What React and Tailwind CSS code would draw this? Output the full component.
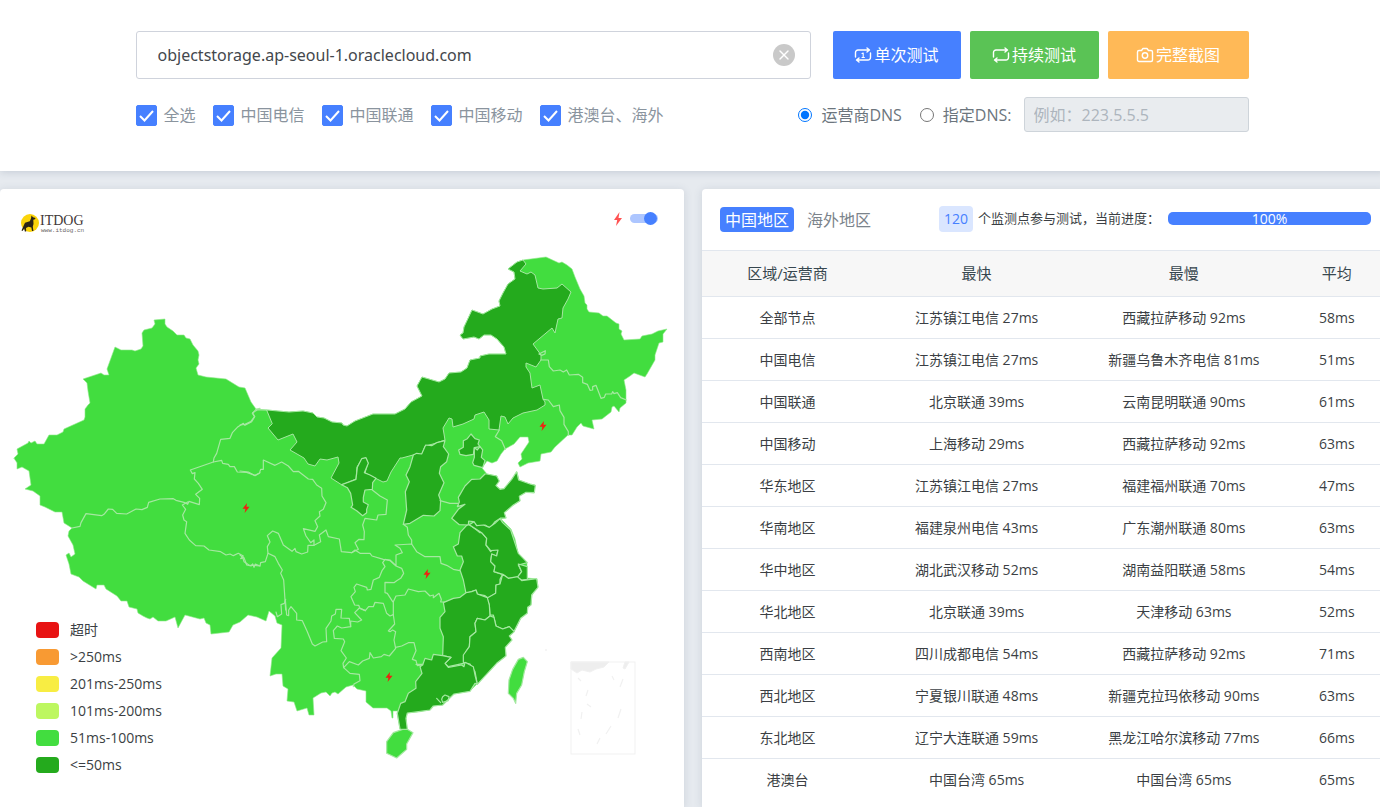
import React, { useState } from 'react';
import { X } from 'lucide-react';

const carriers = ['全选', '中国电信', '中国联通', '中国移动', '港澳台、海外'];

const legend = [
  { label: '超时', color: 'bg-[#e81313]' },
  { label: '>250ms', color: 'bg-[#f89a33]' },
  { label: '201ms-250ms', color: 'bg-[#f8ed43]' },
  { label: '101ms-200ms', color: 'bg-[#bdf760]' },
  { label: '51ms-100ms', color: 'bg-[#42dd3f]' },
  { label: '<=50ms', color: 'bg-[#24aa1d]' },
];

const rows = [
  ['全部节点', '江苏镇江电信 27ms', '西藏拉萨移动 92ms', '58ms'],
  ['中国电信', '江苏镇江电信 27ms', '新疆乌鲁木齐电信 81ms', '51ms'],
  ['中国联通', '北京联通 39ms', '云南昆明联通 90ms', '61ms'],
  ['中国移动', '上海移动 29ms', '西藏拉萨移动 92ms', '63ms'],
  ['华东地区', '江苏镇江电信 27ms', '福建福州联通 70ms', '47ms'],
  ['华南地区', '福建泉州电信 43ms', '广东潮州联通 80ms', '63ms'],
  ['华中地区', '湖北武汉移动 52ms', '湖南益阳联通 58ms', '54ms'],
  ['华北地区', '北京联通 39ms', '天津移动 63ms', '52ms'],
  ['西南地区', '四川成都电信 54ms', '西藏拉萨移动 92ms', '71ms'],
  ['西北地区', '宁夏银川联通 48ms', '新疆克拉玛依移动 90ms', '63ms'],
  ['东北地区', '辽宁大连联通 59ms', '黑龙江哈尔滨移动 77ms', '66ms'],
  ['港澳台', '中国台湾 65ms', '中国台湾 65ms', '65ms'],
];

// Map outline, in map units
const MAINLAND =
  '14,458 18,454 17,449 28,443 29,441 31,443 35,441 37,444 44,444 49,435 57,435 63,432 64,429 84,420 85,417 85,409 88,405 90,403 88,391 87,383 83,379 101,373 104,375 109,375 107,369 115,347 121,350 132,350 135,351 141,349 143,346 142,333 144,330 152,328 155,324 154,320 165,319 165,324 167,327 173,331 177,335 184,335 186,338 190,339 193,345 198,351 199,355 198,360 199,364 196,368 198,375 206,377 226,379 239,387 245,388 251,402 256,409 267,410 289,412 303,411 313,413 317,417 324,418 332,422 342,423 343,425 347,426 355,421 373,414 395,414 405,409 411,402 422,396 417,386 422,377 439,382 445,379 449,373 461,372 467,368 470,360 480,358 480,356 489,354 506,354 504,347 497,339 491,335 484,335 479,339 474,337 463,339 460,335 463,333 464,327 472,310 483,314 492,309 500,306 499,301 503,293 508,284 515,279 514,272 508,269 517,262 523,260 546,257 559,263 562,262 567,265 572,269 575,277 580,289 584,296 585,303 587,305 587,309 589,312 599,313 603,316 607,316 616,323 619,324 619,329 622,331 621,334 624,340 640,339 642,336 652,334 658,331 667,329 663,334 663,342 659,343 655,355 655,360 647,374 645,377 634,373 630,376 624,380 626,390 626,403 620,408 619,412 614,406 612,407 611,412 602,419 592,420 594,429 583,426 581,423 577,427 572,435 568,435 555,447 551,452 541,454 540,461 528,463 520,467 518,463 522,459 521,454 529,442 528,437 520,437 514,444 505,449 501,454 497,461 492,463 487,461 482,468 487,474 497,476 498,481 496,486 500,489 504,489 512,479 517,472 519,480 530,484 535,485 534,493 526,492 519,496 520,501 513,505 504,513 506,518 501,519 511,529 515,539 518,553 527,563 527,578 537,579 538,587 533,591 532,595 531,605 528,607 527,613 521,618 514,632 509,636 512,640 505,647 506,656 497,663 477,684 470,691 454,694 448,699 443,705 433,706 430,710 418,712 407,713 406,718 407,729 400,729 397,713 398,711 393,711 393,718 392,718 391,711 387,708 373,708 366,702 366,691 357,689 353,685 346,687 338,694 335,692 332,693 330,696 326,692 321,693 313,698 314,715 309,715 307,708 297,711 294,702 287,701 288,689 283,686 282,674 276,674 270,676 272,658 281,648 282,625 277,623 275,616 269,611 266,621 257,617 248,615 240,622 233,625 229,632 211,634 210,625 206,623 204,618 200,619 185,615 178,628 175,617 166,621 158,621 153,617 150,619 147,618 143,616 138,613 137,609 129,607 127,601 121,601 117,596 106,589 104,585 97,585 96,589 83,581 79,577 71,574 69,564 66,555 69,553 71,557 75,554 73,545 68,536 69,531 72,528 64,523 62,512 55,512 45,507 40,505 40,496 33,491 25,489 31,485 29,471 22,467 17,469 17,463';

const INNER_MONGOLIA =
  '267,410 289,412 303,411 313,413 317,417 324,418 332,422 342,423 343,425 347,426 355,421 373,414 395,414 405,409 411,402 422,396 417,386 422,377 439,382 445,379 449,373 461,372 467,368 470,360 480,358 480,356 489,354 506,354 504,347 497,339 491,335 484,335 479,339 474,337 463,339 460,335 463,333 464,327 472,310 483,314 492,309 500,306 499,301 503,293 508,284 515,279 514,272 508,269 517,262 523,260 526,264 520,271 527,274 531,272 535,275 538,288 543,289 557,288 562,284 571,292 568,299 563,308 562,318 558,319 555,333 552,328 533,344 541,355 541,360 536,367 526,363 526,367 530,373 532,388 540,385 543,399 545,402 545,405 537,410 523,413 513,418 508,424 505,417 501,416 499,430 489,429 489,420 484,412 475,415 474,419 463,424 453,427 452,419 449,418 443,428 445,440 433,444 425,446 422,454 413,455 402,458 400,458 391,472 387,481 383,482 375,478 365,473 368,463 366,458 362,459 357,467 356,479 342,485 331,478 339,463 338,457 327,460 320,459 315,466 308,464 304,458 290,450 297,442 293,434 278,440 268,428 272,424';

// Provinces and borders are drawn at three units per map unit, sheet by sheet
const sheets = [
  {
    id: 'west',
    transform: 'translate(0 300) scale(0.33333)',
    dark: [],
    light: [],
    borders: [
      '216,684 240,679 243,668 258,641 305,647 312,643 325,627 338,628 350,640 380,642 408,627 426,629 442,622 446,607 480,597 520,596 528,601 552,607 563,613 567,604 598,614 599,595 587,583 607,568 595,550 583,537 585,518 577,521 571,510 640,486 665,481 668,490 685,493 690,500 703,500 712,516 740,517 765,526 780,518',
      '640,486 642,474 650,460 662,418 690,415 697,398 712,382 730,370 735,376 755,365 764,350 757,340 768,328 780,325',
      '563,606 547,615 557,628 548,645 552,660 560,665 555,700 568,720 587,737 612,738 627,750 662,755 678,765 690,762 700,767 715,760 730,768 722,776 732,773 740,795 753,798 758,792 762,802 766,792 780,798',
    ],
  },
  {
    id: 'north',
    transform: 'translate(240 380) scale(0.33333)',
    dark: [
      '305,314 348,298 352,262 365,236 378,233 385,250 373,278 390,285 408,295 398,308 397,328 375,330 370,352 370,366 385,374 380,388 380,398 368,407 350,392 333,382 338,375 332,340 322,323',
      '520,225 530,220 545,222 557,195 575,197 590,188 615,182 610,200 626,222 620,245 602,260 598,280 612,308 596,345 602,362 600,392 582,408 550,406 510,430 490,433 500,390 496,335 508,305 498,285 510,260',
    ],
    light: [],
    borders: [
      '0,135 15,133 32,125 44,110 38,98 52,90 80,90',
      '0,273 25,276 45,287 58,280 62,268 70,268 70,240 105,256 125,246 145,258 160,275 175,274 205,297 218,298 230,315 245,325 246,348 258,368 250,388 238,395 240,408 225,422 233,440 225,454 190,446 198,468 212,488 222,480 222,496 204,496 203,516 185,522 168,515 165,505 156,514 130,495 115,460 98,453 82,467 90,486 82,500 84,520 76,545 62,548 60,558 40,556 28,556 12,545 8,532 0,525',
      '222,496 242,485 238,465 258,450 265,470 298,477 304,515 335,518 355,508 345,488 357,478 372,479 373,455 368,435 375,415 410,420 414,405 438,403 442,360 420,348 397,330',
      '335,518 345,510 360,520 390,520 396,528 430,538 450,540 468,557 468,525 487,518 480,505 465,495 515,492 530,515 555,530 600,530 603,550 620,556 640,568 660,572',
      '490,433 502,442 505,465 515,480 515,492',
      '600,362 630,370 660,370',
      '84,520 105,530 115,550 127,570 122,580 131,600 137,690',
    ],
  },
  {
    id: 'northeast',
    transform: 'translate(400 240) scale(0.33333)',
    dark: [],
    light: [],
    borders: [
      '417,342 436,332 435,342 425,346 417,342',
      '422,360 445,360 448,380 460,393 480,390 490,396 500,390 508,405 535,403 548,412 548,428 562,433 570,451 578,450 578,440 588,436 603,475 613,472 617,462 635,462 638,455 642,461 652,458 662,473 679,480',
      '430,478 445,480 460,500 478,495 480,512 492,532 492,553 505,575 505,586',
      '298,570 286,590 305,602 316,628',
    ],
  },
  {
    id: 'bohai',
    transform: 'translate(420 400) scale(0.33333)',
    dark: [
      '153,102 165,116 178,120 174,132 180,140 163,143 160,163 138,167 120,163 116,150 130,142 130,122 142,116',
      '163,152 163,143 172,150 180,140 188,150 184,172 195,182 188,203 162,196 158,188 163,172',
      '200,222 230,228 238,243 228,257 240,268 252,266 275,238 290,215 296,240 330,252 346,256 343,278 318,277 298,289 300,302 280,315 253,338 258,354 242,354 225,365 210,384 195,375 172,381 160,365 146,363 145,375 118,374 95,355 115,328 135,313 112,320 118,306 115,292 135,258 155,238 180,237 195,222',
    ],
    light: [],
    borders: [],
  },
  {
    id: 'southwest',
    transform: 'translate(250 540) scale(0.33333)',
    dark: [],
    light: ['430,578 458,568 472,568 489,578 470,612 470,628 440,654 410,640 410,605'],
    borders: [
      '107,178 103,190 93,194 95,222 82,230 78,216',
      '106,180 110,225 116,227 116,210 123,200 140,220 140,240 157,242 172,275 187,312 195,318 218,306 230,305 228,265 243,243 245,228 256,222 258,208 275,208 273,234 298,235 302,260 275,264 262,258 250,272 253,295 280,297 284,305 273,332 289,354 279,370 281,383 298,365 325,375 338,363 358,355 360,338 370,354 394,350 402,343 418,348 437,325 432,300 437,275 428,270 420,275 415,273 434,252 430,225',
      '302,260 302,243 323,246 335,240 314,218 328,204 346,212 356,200 370,200 375,187 400,190 410,220 420,228 430,224',
      '346,212 330,205 326,196 314,195 303,170 316,155 312,142 320,132 350,142 352,150 363,148 370,120 388,112 396,92 405,80 398,68 405,58 420,62 438,78 455,85 461,100 452,115 440,122 432,128 405,127 405,158 412,160 428,185',
      '430,225 430,185 438,168 465,165 475,147 505,155 525,153 540,168 550,165 550,173 567,160 574,178 572,186 585,186',
      '437,322 455,318 475,308 492,308 498,332 487,358 498,362 502,377 515,375',
      '281,383 300,400 328,403 330,422 312,432 310,440',
    ],
  },
  {
    id: 'southeast',
    transform: 'translate(380 530) scale(0.33333)',
    dark: [
      '240,8 260,-14 268,-16 290,0 300,8 305,8 320,25 318,45 332,65 340,57 354,60 350,78 335,72 332,95 345,108 342,125 368,133 360,148 360,162 348,165 347,190 325,205 315,197 292,192 288,180 275,185 258,190 250,150 240,120 250,95 245,78 232,78 220,50 235,42',
      '268,-16 282,-25 290,-13 310,-15 328,-8 345,-20 360,-34 368,-22 392,0 415,70 442,98 415,105 425,125 412,142 385,145 368,133 342,125 345,108 332,95 335,72 350,78 354,60 332,62 318,45 320,25 305,8',
      '415,102 442,110 442,148 425,150 412,142 425,125',
      '368,133 385,145 412,140 425,152 470,146 474,172 455,195 453,225 443,232 442,250 422,265 403,302 395,303 388,290 368,297 348,288 340,255 330,255 328,225 320,205 347,190 348,165 360,162',
      '190,218 220,205 240,202 258,188 275,185 288,180 292,192 322,203 328,225 330,258 315,270 292,265 285,280 288,305 270,320 268,350 258,365 250,400 205,410 195,400 213,382 188,377 190,320 180,295 180,262 195,245',
      '330,258 342,262 348,288 368,297 388,290 403,305 388,318 396,330 376,352 378,378 350,400 292,463 285,425 270,402 250,397 250,375 268,350 270,320 288,305 285,280 292,265 315,270',
      '128,405 135,385 155,390 160,373 188,377 213,382 195,400 205,412 245,405 252,410 255,397 280,410 285,435 292,463 285,460 270,484 222,492 188,525 160,528 150,540 82,549 78,565 82,598 60,597 52,550 62,520 75,515 85,490 108,475 107,455 126,430 120,410',
    ],
    light: ['430,382 442,395 433,425 425,465 410,490 407,520 400,505 385,490 387,450 398,418 415,388'],
    borders: [
      '188,500 195,495 207,500 205,512 188,517 185,508 188,500',
      '170,505 182,518',
      '108,403 128,403',
    ],
  },
];

const lossMarks = [
  [246, 508],
  [543, 426],
  [427, 574],
  [389, 677],
];

const ChinaMap = () => (
  <svg viewBox="0 189 684 618" className="block w-full" role="img" aria-label="中国地区">
    <g strokeLinejoin="round" strokeLinecap="round">
      <polygon points={MAINLAND} fill="#42dd3f" stroke="#8ee98a" strokeWidth="0.6" />
      <polygon points={INNER_MONGOLIA} fill="#24aa1d" stroke="#a5e8a1" strokeWidth="1" />
      {sheets.map((sheet) => (
        <g key={sheet.id} transform={sheet.transform} stroke="#a5e8a1" strokeWidth="3.6">
          {sheet.light.map((points) => (
            <polygon key={points} points={points} fill="#42dd3f" />
          ))}
          {sheet.dark.map((points) => (
            <polygon key={points} points={points} fill="#24aa1d" />
          ))}
          {sheet.borders.map((points) => (
            <polyline key={points} points={points} fill="none" />
          ))}
        </g>
      ))}
    </g>

    {lossMarks.map(([x, y]) => (
      <path
        key={x}
        transform={`translate(${x} ${y})`}
        d="M1 -5 L-3.5 0.8 L-0.6 0.8 L-1.4 5 L3.5 -1.2 L0.5 -1.2 Z"
        fill="#ee2211"
      />
    ))}

    {/* South China Sea inset */}
    <g fill="none" stroke="#f1f1f1">
      <rect x="571" y="662" width="64" height="92" strokeWidth="1" />
      <path d="M571 662h38l-5 5-8 2-6 3-8-2-5 3-6-4z" fill="#eeeeee" />
      <path d="M629 662l-4 7-2-1 2-6z" fill="#eeeeee" />
      <path
        d="M623 679l-3 8M621 709l-3 9M611 726l-5 8M600 738l-3 6M578 729l2 6M582 712l-1 7M587 704l4 3M588 690l-2 6M578 678l3 3M612 676l2 4"
        strokeWidth="1.2"
      />
    </g>
    <circle cx="546" cy="650" r="0.7" fill="#e3e3e3" />
  </svg>
);

const Logo = () => (
  <svg viewBox="0 0 66 20" width="66" height="20" role="img" aria-label="ITDOG">
    <circle cx="9" cy="10" r="9" fill="#fbd40a" />
    <path
      d="M10.500 2.500L12 4.200 14.500 5 14 6.300 12.300 6.800 12.500 11 11.800 13.500 12.400 18 11 18 10.400 14.600 7.500 13.800 5 15 5.200 18.600 3.800 18.600 3.300 15.500 1.500 18 .5 17.500 2.500 13 4 9.800 8.800 8.200 10 5.500Z"
      fill="#2b2416"
    />
    <text x="19" y="12" fontSize="14" fill="#3f3838" className="font-['Liberation_Serif',serif]">
      ITDOG
    </text>
    <text x="20" y="19" fontSize="6" fill="#6b6666" className="font-['Liberation_Mono',monospace]">
      www.itdog.cn
    </text>
  </svg>
);

const LoopIcon = ({ once }) => (
  <svg
    viewBox="0 0 18 16"
    width="18"
    height="16"
    fill="none"
    stroke="currentColor"
    strokeWidth="1.4"
    strokeLinecap="round"
    strokeLinejoin="round"
  >
    <path d="M1.500 10V5.500a2.500 2.500 0 0 1 2.500-2.500h11M13 1l2.500 2L13 5" />
    <path d="M16.500 6v4.500a2.500 2.500 0 0 1-2.500 2.500H3M5 11l-2.500 2L5 15" />
    {once && <path d="M8 6.500l1.200-.5v4.500M8 10.500h2.400" strokeWidth="1.1" />}
  </svg>
);

const CameraIcon = () => (
  <svg viewBox="0 0 18 16" width="18" height="16" fill="none" stroke="currentColor" strokeWidth="1.4" strokeLinejoin="round">
    <path d="M3 3.500h2.500L7 1.500h4l1.500 2H15a1.500 1.500 0 0 1 1.500 1.500v8a1.500 1.500 0 0 1-1.500 1.500H3A1.500 1.500 0 0 1 1.500 13V5A1.500 1.500 0 0 1 3 3.500Z" />
    <circle cx="9" cy="8.500" r="2.700" />
  </svg>
);

const CarrierCheckbox = ({ label }) => (
  <label className="flex items-center gap-[7px] text-[#8a949e]">
    <span className="relative size-[21px]">
      <input
        type="checkbox"
        defaultChecked
        className="peer block size-[21px] appearance-none rounded-[2px] border border-gray-300 checked:border-[#4680ff] checked:bg-[#4680ff]"
      />
      <svg
        viewBox="0 0 21 21"
        className="pointer-events-none absolute inset-0 hidden peer-checked:block"
        fill="none"
        stroke="white"
        strokeWidth="2"
      >
        <path d="M4 11l4.500 4.500L17 6" />
      </svg>
    </span>
    {label}
  </label>
);

const App = () => {
  const [host, setHost] = useState('objectstorage.ap-seoul-1.oraclecloud.com');
  const [dns, setDns] = useState('carrier');
  const [showLoss, setShowLoss] = useState(true);

  return (
    <div className="overflow-x-hidden bg-[#e6eaef] font-['Open_Sans','Noto_Sans_CJK_SC',sans-serif] text-base text-[#3b3f44]">
      <div className="-mr-1.5 flex min-h-screen flex-col gap-[18px]">
        {/* Test form */}
        <header className="bg-white pt-[31px] pr-[18px] pb-[39px] pl-4 shadow-[0_1px_8px_rgba(60,80,110,0.2)]">
          <form className="mx-auto max-w-[1113px]" onSubmit={(e) => e.preventDefault()}>
            <div className="flex gap-[9px]">
              <div className="mr-[13px] flex h-12 flex-1 items-center rounded-[3px] border border-[#cfd3dc] pr-[15px] pl-[21px]">
                <input
                  type="text"
                  aria-label="域名"
                  value={host}
                  onChange={(e) => setHost(e.target.value)}
                  className="min-w-0 flex-1 font-['Noto_Sans','Noto_Sans_CJK_SC',sans-serif] text-[#43474c] outline-none"
                />
                <button
                  type="button"
                  aria-label="清空"
                  onClick={() => setHost('')}
                  className="flex size-[22px] items-center justify-center rounded-full bg-[#c9c9c9] text-white"
                >
                  <X className="size-4" />
                </button>
              </div>
              <button type="submit" className="flex h-12 w-32 items-center justify-center gap-[2px] rounded-[2px] bg-[#4680ff] text-white">
                <LoopIcon once />
                单次测试
              </button>
              <button type="button" className="flex h-12 w-[129px] items-center justify-center gap-[2px] rounded-[2px] bg-[#5ac355] text-white">
                <LoopIcon />
                持续测试
              </button>
              <button type="button" className="flex h-12 w-[141px] items-center justify-center gap-[2px] rounded-[2px] bg-[#ffb957] text-white">
                <CameraIcon />
                完整截图
              </button>
            </div>

            <div className="mt-[18px] flex items-center justify-between">
              <div className="flex gap-[17px] pt-px">
                {carriers.map((label) => (
                  <CarrierCheckbox key={label} label={label} />
                ))}
              </div>
              <div className="flex items-center text-[#6c757d]">
                <label className="flex items-center gap-[9px]">
                  <input
                    type="radio"
                    name="dns"
                    checked={dns === 'carrier'}
                    onChange={() => setDns('carrier')}
                    className="size-3.5"
                  />
                  运营商DNS
                </label>
                <label className="ml-[18px] flex items-center gap-[9px]">
                  <input
                    type="radio"
                    name="dns"
                    checked={dns === 'custom'}
                    onChange={() => setDns('custom')}
                    className="size-3.5"
                  />
                  指定DNS:
                </label>
                <input
                  type="text"
                  aria-label="DNS"
                  placeholder="例如：223.5.5.5"
                  disabled={dns === 'carrier'}
                  className="ml-3 h-[35px] w-[225px] rounded-[3px] border border-[#ced4da] px-[9px] placeholder:text-[#adb5bd] disabled:bg-[#e9ecef]"
                />
              </div>
            </div>
          </form>
        </header>

        <main className="grid flex-1 grid-cols-2 gap-[18px]">
          {/* Map */}
          <section className="relative rounded-t bg-white shadow-[0_1px_8px_rgba(60,80,110,0.15)]">
            <ChinaMap />
            <div className="absolute inset-x-0 top-0 flex items-start justify-between pt-6 pr-[26px] pl-[21px]">
              <Logo />
              <label className="flex items-start gap-2">
                <svg viewBox="0 0 8 14" width="8" height="14" fill="#ff5252" className="-mt-px">
                  <path d="M5.500 0L0 8h3.200L2 14l6-8H4.500Z" />
                </svg>
                <span className="relative -mt-px flex h-[13px] w-7 items-center">
                  <input
                    type="checkbox"
                    role="switch"
                    aria-label="丢包"
                    checked={showLoss}
                    onChange={(e) => setShowLoss(e.target.checked)}
                    className="peer h-[9px] w-7 appearance-none rounded-full bg-gray-300 checked:bg-[#adc6ff]"
                  />
                  <span className="pointer-events-none absolute left-0 size-[13px] rounded-full bg-gray-400 peer-checked:right-px peer-checked:left-auto peer-checked:bg-[#4680ff]" />
                </span>
              </label>
            </div>
            <ul className="absolute top-[427px] left-9 text-sm">
              {legend.map((item) => (
                <li key={item.label} className="flex h-[27px] items-center gap-[11px]">
                  <span className={`h-4 w-[23px] rounded ${item.color}`} />
                  {item.label}
                </li>
              ))}
            </ul>
          </section>

          {/* Results */}
          <section className="rounded-t bg-white shadow-[0_1px_8px_rgba(60,80,110,0.15)]">
            <div className="flex h-[61px] items-center pr-[15px] pl-[18px]">
              <button type="button" className="h-[25px] rounded bg-[#4680ff] px-[5px] leading-6 text-white">
                中国地区
              </button>
              <button type="button" className="ml-2 px-[5px] text-[#7b838b]">
                海外地区
              </button>
              <div className="ml-auto flex items-center pb-[2px] text-[13px]">
                <span className="mr-[5px] rounded bg-[#dae6ff] px-[5px] text-sm leading-[26px] text-[#4680ff]">120</span>
                个监测点参与测试，当前进度：
                <div className="ml-2 h-[13px] w-[203px] rounded-[5px] bg-[#4680ff] text-center text-sm leading-[13px] text-white">
                  100%
                </div>
              </div>
            </div>
            <table className="w-full table-fixed text-center text-sm">
              <colgroup>
                <col className="w-[25%]" />
                <col className="w-[30.3%]" />
                <col className="w-[30.3%]" />
                <col className="w-[14.4%]" />
              </colgroup>
              <thead>
                <tr className="h-[46px] border-y border-[#e2e7ee] bg-[#f7f7f7] text-[15px] text-[#37474f]">
                  <th className="font-normal">区域/运营商</th>
                  <th className="font-normal">最快</th>
                  <th className="font-normal">最慢</th>
                  <th className="font-normal">平均</th>
                </tr>
              </thead>
              <tbody>
                {rows.map((row) => (
                  <tr key={row[0]} className="h-[42px] border-b border-[#e2e7ee] last:border-b-0">
                    {row.map((cell, idx) => (
                      <td key={idx}>{cell}</td>
                    ))}
                  </tr>
                ))}
              </tbody>
            </table>
          </section>
        </main>
      </div>
    </div>
  );
};

export default App;
